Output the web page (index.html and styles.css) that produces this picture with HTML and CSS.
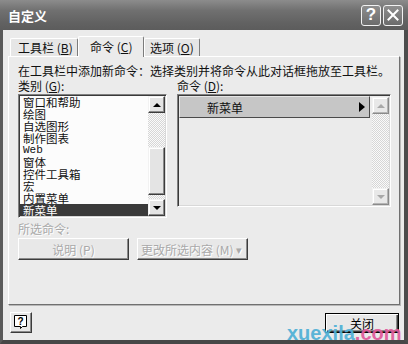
FILE: index.html
```html
<!DOCTYPE html>
<html lang="zh-CN">
<head>
<meta charset="utf-8">
<title>自定义</title>
<link rel="stylesheet" href="styles.css">
</head>
<body>
<div class="win">
  <div class="titlebar">
    <span class="title">自定义</span>
    <div class="tbtns">
      <span class="tbtn">?</span>
      <span class="tbtn"><svg width="12" height="12" viewBox="0 0 12 12"><path d="M1.5 1.5 L10.5 10.5 M10.5 1.5 L1.5 10.5" stroke="#fff" stroke-width="2" stroke-linecap="square"/></svg></span>
    </div>
  </div>
  <div class="client">
    <div class="tabs">
      <div class="tab t1">工具栏 (<u>B</u>)</div>
      <div class="tab t2 sel">命令 (<u>C</u>)</div>
      <div class="tab t3">选项 (<u>O</u>)</div>
    </div>
    <div class="panel">
      <p class="desc">在工具栏中添加新命令：选择类别并将命令从此对话框拖放至工具栏。</p>
      <div class="grid">
        <div class="lbl">类别 (<u>G</u>):</div>
        <div class="lbl">命令 (<u>D</u>):</div>
        <div class="listbox cat">
          <ul class="items">
            <li class="item">窗口和帮助</li>
            <li class="item">绘图</li>
            <li class="item">自选图形</li>
            <li class="item">制作图表</li>
            <li class="item mono">Web</li>
            <li class="item">窗体</li>
            <li class="item">控件工具箱</li>
            <li class="item">宏</li>
            <li class="item">内置菜单</li>
            <li class="item sel">新菜单</li>
          </ul>
          <div class="vscroll">
            <span class="sbtn"><i class="arr up"></i></span>
            <span class="track"><span class="thumb"></span></span>
            <span class="sbtn"><i class="arr down"></i></span>
          </div>
        </div>
        <div class="listbox cmd">
          <div class="rows">
            <div class="row"><span>新菜单</span><i class="tri"></i></div>
          </div>
          <div class="vscroll dis">
            <span class="sbtn"><i class="arr up"></i></span>
            <span class="track"></span>
            <span class="sbtn"><i class="arr down"></i></span>
          </div>
        </div>
      </div>
      <p class="sel-label">所选命令:</p>
      <div class="btnrow">
        <button class="btn dis">说明 (P)</button>
        <button class="btn dis split"><span>更改所选内容 (M)</span><span class="dd">▾</span></button>
      </div>
    </div>
    <div class="footer">
      <button class="btn help"><svg width="14" height="15" viewBox="0 0 14 15"><path d="M0.5 0.5 H12.5 V11.5 H8.5 L6.5 13.5 V11.5 H0.5 Z" fill="#fff" stroke="#000"/><text x="6.5" y="10" text-anchor="middle" font-family="Liberation Sans" font-weight="bold" font-size="10" fill="#000">?</text></svg></button>
      <button class="btn close">关闭</button>
    </div>
  </div>
  <div class="watermark">xuexila<span>.com</span></div>
</div>
</body>
</html>
```
FILE: styles.css
```css
* { box-sizing: border-box; }
body { margin: 0; font-family: "Noto Sans CJK SC", "Liberation Sans", sans-serif; font-size: 12px; color: #111; }
ul { margin: 0; padding: 0; list-style: none; }
p { margin: 0; }
u { text-decoration: underline; text-underline-offset: 1px; }

.win { position: relative; width: 408px; height: 344px; display: flex; flex-direction: column; background: #ebebeb; overflow: hidden; }

.titlebar { height: 30px; flex: none; display: flex; align-items: center; justify-content: space-between; padding: 0 5px 0 8px; background: linear-gradient(#8c8c8c, #707070 35%, #626262 75%, #5c5c5c); color: #fff; }
.title { font-size: 13px; font-weight: bold; line-height: 16px; margin-top: 1px; }
.tbtns { display: flex; gap: 2px; }
.tbtn { width: 20px; height: 21px; border: 1px solid #f2f2f2; border-radius: 3px; background: linear-gradient(#8e8e8e, #6c6c6c); display: flex; align-items: center; justify-content: center; font: bold 17px "Liberation Sans", sans-serif; color: #fff; }

.client { flex: 1; display: flex; flex-direction: column; border-left: 3px solid #5a5a5a; border-right: 4px solid #4c4c4c; border-bottom: 4px solid #474747; padding: 6px 4px 0 5px; }

.tabs { position: relative; z-index: 1; display: flex; align-items: flex-end; height: 20px; padding-left: 2px; flex: none; }
.tab { height: 18px; line-height: 17px; border: 1px solid; border-color: #fff #7c7c7c transparent #fff; border-bottom: none; border-radius: 2px 2px 0 0; white-space: nowrap; background: #e6e6e6; }
.t1 { width: 68px; padding-left: 7px; }
.t2 { width: 66px; padding-left: 11px; }
.t3 { width: 56px; padding-left: 5px; }
.tab.sel { height: 21px; margin-bottom: -1px; line-height: 19px; background: #ebebeb; position: relative; z-index: 2; }

.panel { height: 249px; flex: none; border: 1px solid; border-color: #fff #707070 #707070 #fff; box-shadow: 1px 1px 0 #b8b8b8; padding: 7px 0 0 9px; }
.desc { line-height: 13px; height: 13px; white-space: nowrap; }
.grid { display: grid; grid-template-columns: 149px 214px; column-gap: 10px; row-gap: 2px; margin-top: 2px; align-items: start; }
.lbl { line-height: 13px; height: 13px; white-space: nowrap; }

.listbox { display: flex; border: 1px solid; border-color: #808080 #fff #fff #808080; box-shadow: inset 1px 1px 0 #3a3a3a, inset -1px -1px 0 #d8d8d8; padding: 1px; }
.cat { height: 124px; background: #fcfcfc; }
.cmd { height: 113px; background: #ebebeb; }

.items { flex: 1; padding-top: 0; overflow: hidden; }
.item { height: 12px; line-height: 12px; font-size: 11.5px; padding-left: 3px; white-space: nowrap; }
.item.mono { font-family: "Liberation Mono", monospace; font-size: 11px; }
.item.sel { background: #3a3a3a; color: #fff; }

.vscroll { width: 17px; flex: none; display: flex; flex-direction: column; }
.sbtn { height: 17px; flex: none; display: flex; align-items: center; justify-content: center; background: #e4e4e4; border: 1px solid; border-color: #f2f2f2 #3c3c3c #3c3c3c #f2f2f2; box-shadow: inset -1px -1px 0 #8a8a8a, inset 1px 1px 0 #fff; }
.track { flex: 1; display: flex; flex-direction: column; justify-content: flex-end; background: repeating-conic-gradient(#fafafa 0 25%, #d6d6d6 0 50%) 0 0 / 2px 2px; }
.thumb { height: 48px; margin-bottom: 4px; background: #e4e4e4; border: 1px solid; border-color: #f2f2f2 #3c3c3c #3c3c3c #f2f2f2; box-shadow: inset -1px -1px 0 #8a8a8a, inset 1px 1px 0 #fff; }
.arr { width: 0; height: 0; border-left: 4px solid transparent; border-right: 4px solid transparent; }
.arr.up { border-bottom: 4px solid #000; }
.arr.down { border-top: 4px solid #000; }
.vscroll.dis .arr.up { border-bottom-color: #a8a8a8; }
.vscroll.dis .arr.down { border-top-color: #a8a8a8; }
.vscroll.dis .sbtn { border-color: #f2f2f2 #8a8a8a #8a8a8a #f2f2f2; box-shadow: inset -1px -1px 0 #b4b4b4, inset 1px 1px 0 #fff; background: #e8e8e8; }
.vscroll.dis { margin-top: 1px; height: 108px; }

.rows { flex: 1; margin-right: 2px; }
.row { height: 22px; display: flex; align-items: center; justify-content: space-between; padding: 0 4px 0 27px; background: #c6c6c6; border: 1px solid; border-color: #e6e6e6 #4a4a4a #4a4a4a #e6e6e6; }
.tri { width: 0; height: 0; border-top: 5px solid transparent; border-bottom: 5px solid transparent; border-left: 6px solid #000; }

.sel-label { margin-top: 4px; line-height: 13px; color: #a9a9a9; text-shadow: 1px 1px 0 #fff; }
.btnrow { display: flex; gap: 8px; margin-top: 3px; }
.btn { font: inherit; font-size: 12px; margin: 0; padding: 0; background: #e8e8e8; border: 1px solid; border-color: #fff #3c3c3c #3c3c3c #fff; box-shadow: inset -1px -1px 0 #8a8a8a; color: #111; display: flex; align-items: center; justify-content: center; }
.btnrow .btn { width: 111px; height: 22px; }
.btn.dis { color: #a9a9a9; text-shadow: 1px 1px 0 #fff; }
.btn.split { justify-content: space-between; padding: 0 5px 0 3px; }
.dd { font-size: 11px; }

.footer { flex: 1; display: flex; justify-content: space-between; align-items: flex-start; padding: 7px 1px 0 2px; }
.help { width: 22px; height: 21px; }
.close { width: 74px; height: 20px; margin-top: 1px; border: 1px solid #000; box-shadow: inset 1px 1px 0 #fff, inset -1px -1px 0 #3c3c3c, inset -2px -2px 0 #8a8a8a; color: #000; }

.watermark { position: absolute; left: 287px; top: 323px; font: bold 20px/20px "Liberation Sans", Arial, sans-serif; color: #4fb0d6; opacity: 0.92; z-index: 5; white-space: nowrap; }
.watermark span { color: #e0599a; }
```
